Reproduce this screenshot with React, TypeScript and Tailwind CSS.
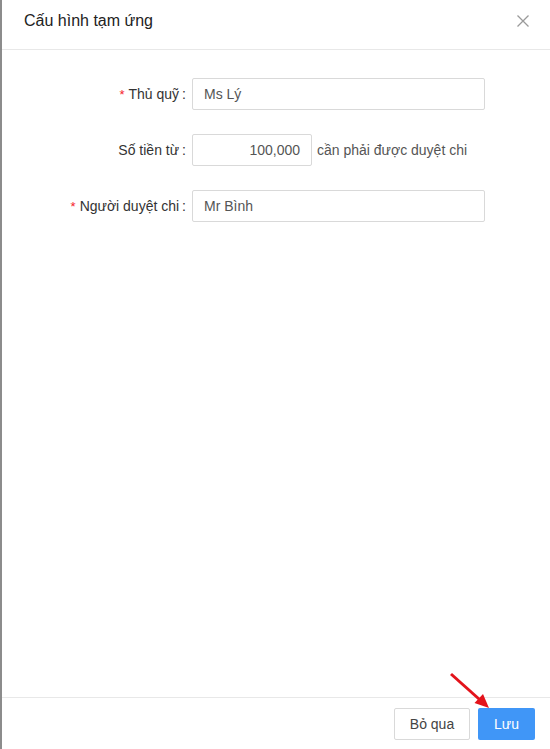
import type { ReactNode } from 'react'

const font = { fontFamily: '"Liberation Sans", Arial, sans-serif' }

function Row({ label, required, children }: { label: string; required?: boolean; children: ReactNode }) {
  return (
    <div className="flex items-center h-[32px]">
      <div className="w-[190px] pr-[6px] text-right text-[14px] text-[#333] whitespace-nowrap">
        {required && <span className="text-[#f5222d] mr-[4px] text-[13px]">*</span>}
        {label}
        <span className="ml-[3px]">:</span>
      </div>
      {children}
    </div>
  )
}

export default function App() {
  return (
    <div style={font} className="relative w-[550px] h-[749px] bg-white border-l-2 border-[#8c8c8c] flex flex-col overflow-hidden">
      {/* Header */}
      <div className="h-[50px] shrink-0 flex items-center justify-between pl-[22px] pr-[20px] border-b border-[#e8e8e8]">
        <h3 className="text-[16px] text-[#222] -mt-[8px]">Cấu hình tạm ứng</h3>
        <svg width="14" height="14" viewBox="0 0 14 14" className="-mt-[7px]">
          <path d="M1.5 1.5 L12.5 12.5 M12.5 1.5 L1.5 12.5" stroke="#9a9a9a" strokeWidth="1.3" fill="none" />
        </svg>
      </div>

      {/* Body */}
      <div className="flex-1 pt-[28px] flex flex-col gap-[24px]">
        <Row label="Thủ quỹ" required>
          <div className="w-[293px] h-[32px] border border-[#d9d9d9] rounded-[2px] px-[11px] flex items-center text-[14px] text-[#555]">
            Ms Lý
          </div>
        </Row>
        <Row label="Số tiền từ">
          <div className="w-[120px] h-[32px] border border-[#d9d9d9] rounded-[2px] px-[11px] flex items-center justify-end text-[14px] text-[#555]">
            100,000
          </div>
          <span className="ml-[5px] text-[14px] text-[#555]">cần phải được duyệt chi</span>
        </Row>
        <Row label="Người duyệt chi" required>
          <div className="w-[293px] h-[32px] border border-[#d9d9d9] rounded-[2px] px-[11px] flex items-center text-[14px] text-[#555]">
            Mr Bình
          </div>
        </Row>
      </div>

      {/* Footer */}
      <div className="h-[52px] shrink-0 border-t border-[#e8e8e8] flex items-start justify-end gap-[8px] pt-[10px] pr-[15px]">
        <button className="h-[32px] w-[76px] border border-[#d9d9d9] rounded-[2px] bg-white text-[14px] text-[#444]">
          Bỏ qua
        </button>
        <button className="h-[32px] w-[57px] rounded-[2px] bg-[#4096f7] text-[14px] text-white">
          Lưu
        </button>
      </div>

      {/* Annotation arrow */}
      <svg className="absolute left-0 top-0 pointer-events-none" width="550" height="749" viewBox="0 0 550 749">
        <line x1="449" y1="674" x2="477" y2="699" stroke="#e3131b" strokeWidth="3" />
        <polygon points="487,708 472.5,703 481,694" fill="#e3131b" />
      </svg>
    </div>
  )
}
